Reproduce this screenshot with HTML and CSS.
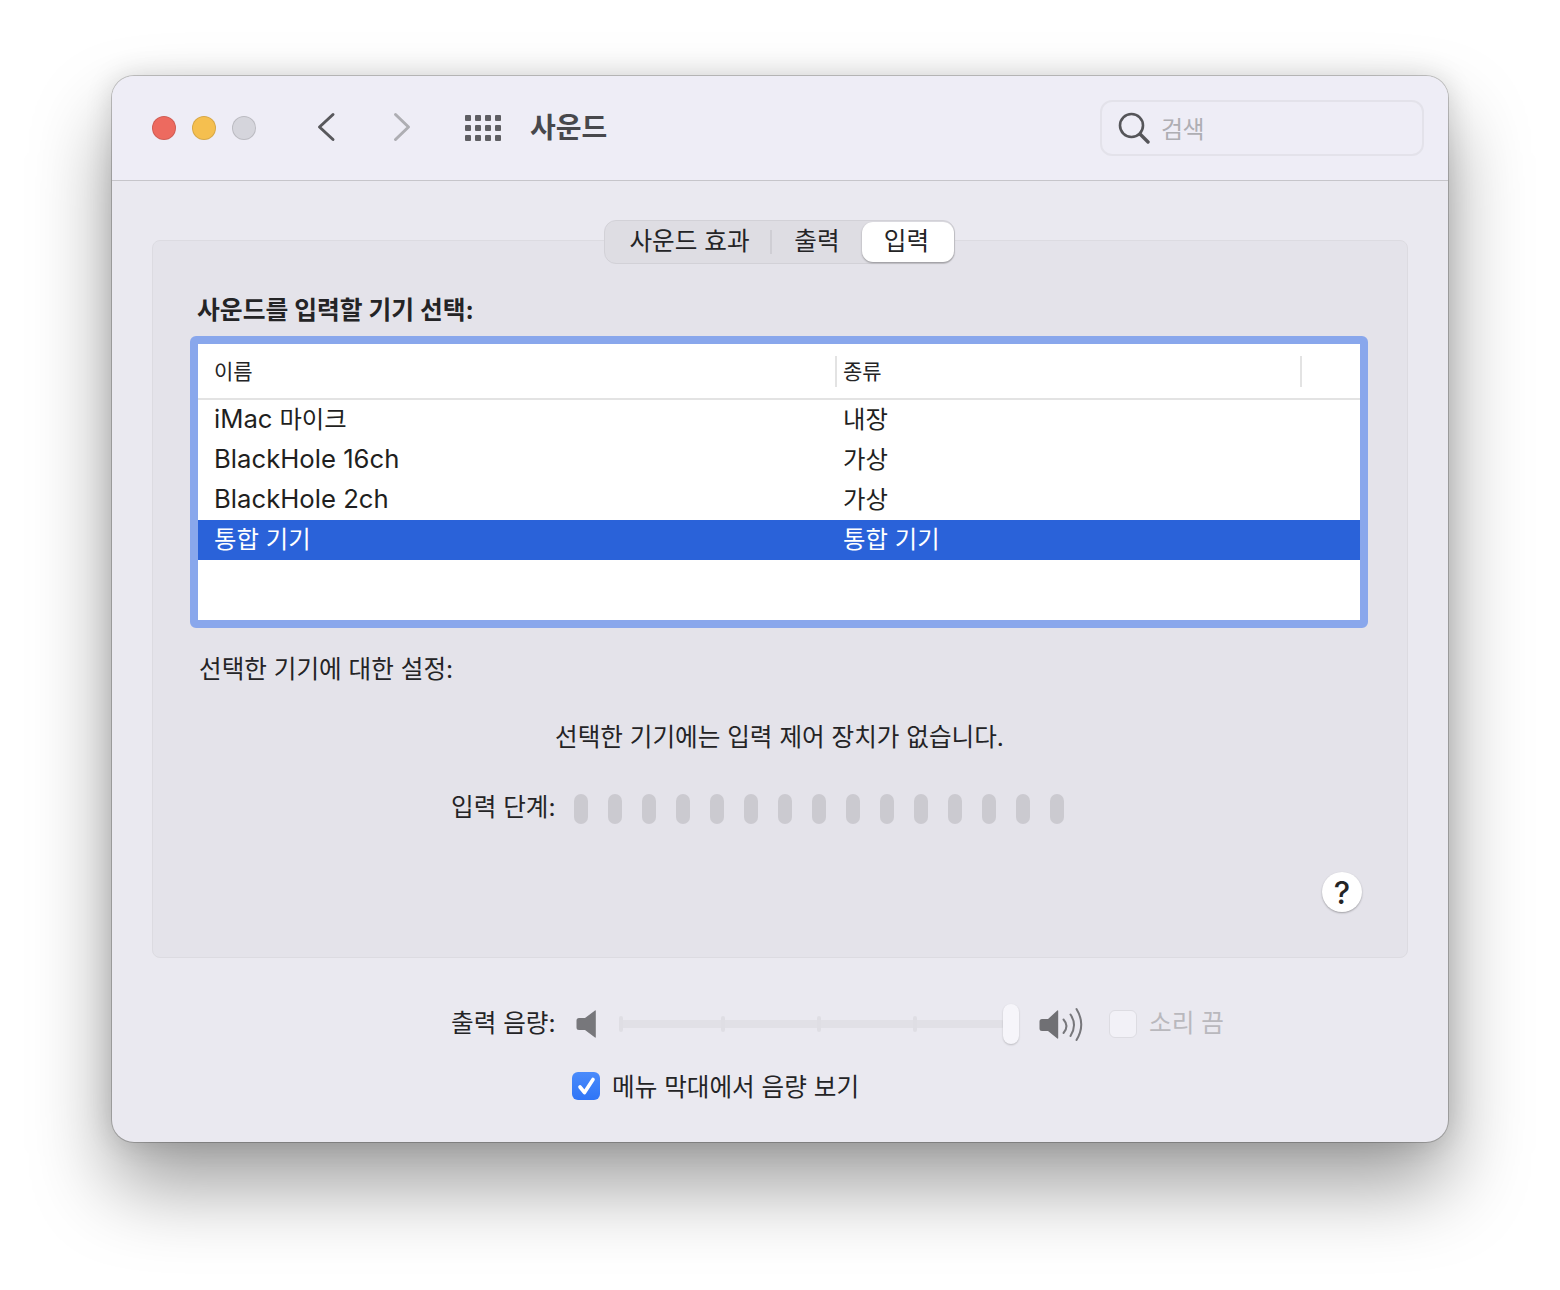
FILE: index.html
```html
<!DOCTYPE html>
<html lang="ko">
<head>
  <meta charset="UTF-8">
  <title>사운드</title>
  <link rel="stylesheet" href="styles.css">
</head>
<body>
  <div class="window">
    <!-- 타이틀 바 -->
    <div class="titlebar">
      <div class="lights">
        <span class="light red"></span>
        <span class="light yellow"></span>
        <span class="light gray"></span>
      </div>
      <svg class="nav-icon" width="20" height="32" viewBox="0 0 20 32"><path d="M17 3.5 L3.5 16 L17 28.5" fill="none" stroke="#58585c" stroke-width="3" stroke-linecap="round" stroke-linejoin="round"/></svg>
      <svg class="nav-icon next" width="20" height="32" viewBox="0 0 20 32"><path d="M3.5 3.5 L16.5 16 L3.5 28.5" fill="none" stroke="#aeaeb3" stroke-width="3" stroke-linecap="round" stroke-linejoin="round"/></svg>
      <div class="grid-icon">
        <i></i><i></i><i></i><i></i><i></i><i></i><i></i><i></i><i></i><i></i><i></i><i></i>
      </div>
      <div class="title">사운드</div>
      <div class="search">
        <svg width="32" height="32" viewBox="0 0 32 32"><circle cx="13.5" cy="13.5" r="11.5" fill="none" stroke="#555559" stroke-width="2.6"/><path d="M22 22 L30 30" stroke="#555559" stroke-width="3.4" stroke-linecap="round"/></svg>
        <span>검색</span>
      </div>
    </div>

    <div class="content">
      <div class="panel">
        <div class="tabs">
          <div class="tab tab-first">사운드 효과</div>
          <div class="tab-sep"></div>
          <div class="tab tab-second">출력</div>
          <div class="tab tab-active">입력</div>
        </div>

        <div class="heading">사운드를 입력할 기기 선택:</div>

        <div class="device-table">
          <div class="table-head">
            <div class="col-name">이름</div>
            <div class="col-type">종류</div>
          </div>
          <div class="table-row"><div class="col-name"><span class="latin">iMac</span> 마이크</div><div class="col-type">내장</div></div>
          <div class="table-row"><div class="col-name"><span class="latin">BlackHole 16ch</span></div><div class="col-type">가상</div></div>
          <div class="table-row"><div class="col-name"><span class="latin">BlackHole 2ch</span></div><div class="col-type">가상</div></div>
          <div class="table-row selected"><div class="col-name">통합 기기</div><div class="col-type">통합 기기</div></div>
        </div>

        <div class="settings-label">선택한 기기에 대한 설정:</div>
        <div class="no-control">선택한 기기에는 입력 제어 장치가 없습니다.</div>

        <div class="level-row">
          <div class="row-label">입력 단계:</div>
          <div class="level-bars">
            <i></i><i></i><i></i><i></i><i></i><i></i><i></i><i></i><i></i><i></i><i></i><i></i><i></i><i></i><i></i>
          </div>
        </div>

        <div class="help-wrap"><div class="help">?</div></div>
      </div>

      <!-- 출력 음량 -->
      <div class="volume-row">
        <div class="row-label">출력 음량:</div>
        <svg class="spk-low" width="20" height="30" viewBox="0 0 20 30"><path d="M19 1.5 Q19.8 1 19.8 2 V28 Q19.8 29 19 28.5 L9 21 H3 Q0.5 21 0.5 18.5 V11.5 Q0.5 9 3 9 H9 Z" fill="#77777b"/></svg>
        <div class="slider">
          <div class="track"></div>
          <span class="tick t1"></span>
          <span class="tick t2"></span>
          <span class="tick t3"></span>
          <span class="tick t4"></span>
          <div class="thumb"></div>
        </div>
        <svg class="spk-high" width="46" height="34" viewBox="0 0 46 34"><path d="M18.3 3.5 Q19.2 3 19.2 4 V31 Q19.2 32 18.3 31.5 L9 24 H3 Q0.5 24 0.5 21.5 V14.5 Q0.5 12 3 12 H9 Z" fill="#707074"/><g fill="none" stroke="#77777b" stroke-width="2" stroke-linecap="round"><path d="M24.5 12.5 Q30.5 19 24.5 26"/><path d="M31.5 7.5 Q38.5 18 31.5 29"/><path d="M37.5 2 Q47 17.5 37.5 33"/></g></svg>
        <div class="check-off"></div>
        <div class="mute-label">소리 끔</div>
      </div>

      <div class="menu-row">
        <div class="check-on">
          <svg width="28" height="28" viewBox="0 0 28 28"><path d="M8 15 L12.5 20.5 L21 7.5" fill="none" stroke="#fff" stroke-width="3.6" stroke-linecap="round" stroke-linejoin="round"/></svg>
        </div>
        <div class="menu-label">메뉴 막대에서 음량 보기</div>
      </div>
    </div>
  </div>
</body>
</html>
```

FILE: styles.css
```css
* {
  box-sizing: border-box;
}

body {
  margin: 0;
  padding: 76px 112px 148px;
  background-color: #fff;
  font-family: "Inter", "Noto Sans CJK KR", sans-serif;
  color: #242426;
}

.window {
  width: 1336px;
  height: 1066px;
  background-color: #eae9f0;
  border-radius: 22px;
  box-shadow: 0 0 0 1px rgba(0, 0, 0, 0.2), 0 44px 80px rgba(0, 0, 0, 0.38), 0 0 28px rgba(0, 0, 0, 0.14);
  overflow: hidden;
}

/* 타이틀 바 */
.titlebar {
  display: flex;
  align-items: center;
  height: 105px;
  padding: 0 24px 1px 40px;
  background-color: #eeedf6;
  border-bottom: 1px solid #c6c5ca;
}

.lights {
  display: flex;
  gap: 16px;
  margin-right: 60px;
}

.light {
  width: 24px;
  height: 24px;
  border-radius: 50%;
  border: 1px solid rgba(0, 0, 0, 0.12);
}

.red { background-color: #ed6a5f; }
.yellow { background-color: #f5bf4f; }
.gray { background-color: #d5d5dc; }

.nav-icon {
  margin-bottom: 2px;
}

.next {
  margin-left: 56px;
}

.grid-icon {
  display: grid;
  grid-template-columns: repeat(4, 6px);
  gap: 4px;
  margin-left: 53px;
}

.grid-icon i {
  width: 6px;
  height: 6px;
  border-radius: 1px;
  background-color: #5e5e63;
}

.title {
  margin-left: 29px;
  margin-bottom: 4px;
  font-size: 28px;
  font-weight: 700;
  color: #48484c;
}

.search {
  display: flex;
  align-items: center;
  width: 324px;
  height: 56px;
  margin-left: auto;
  padding-left: 16px;
  border: 2px solid #e3e2ea;
  border-radius: 12px;
  font-size: 24px;
  color: #aeaeb3;
}

.search span {
  margin-left: 11px;
  letter-spacing: -0.7px;
}

.content {
  padding: 59px 40px 0;
}

.panel {
  height: 718px;
  padding: 0 38px 0 37px;
  background-color: #e4e3ea;
  border: 1px solid #dcdbe1;
  border-radius: 8px;
}

/* 탭 */
.tabs {
  display: flex;
  align-items: center;
  width: 351px;
  height: 44px;
  margin: -21px auto 0;
  background-color: #dedde3;
  border: 1px solid #d2d1d7;
  border-radius: 12px;
  font-size: 24.6px;
}

.tab {
  height: 40px;
  line-height: 38px;
  text-align: center;
}

.tab-first {
  width: 165px;
  padding-left: 4px;
}

.tab-sep {
  width: 2px;
  height: 24px;
  background-color: #cfced4;
}

.tab-second {
  width: 90px;
}

.tab-active {
  width: 92px;
  padding-right: 3px;
  background-color: #fff;
  border-radius: 11px;
  box-shadow: 0 1px 2px rgba(0, 0, 0, 0.35);
}

.heading {
  margin: 28px 0 0 7px;
  height: 44px;
  font-size: 24.8px;
  line-height: 36px;
  font-weight: 700;
}

/* 기기 목록 */
.device-table {
  width: 1178px;
  height: 292px;
  background-color: #fff;
  border: 8px solid #89a7ec;
  border-radius: 6px;
}

.table-head {
  display: flex;
  align-items: center;
  height: 56px;
  border-bottom: 2px solid #e3e3e3;
  font-size: 21px;
}

.table-head .col-name {
  width: 639px;
  height: 31px;
  line-height: 31px;
  padding-left: 16px;
  border-right: 2px solid #e3e3e3;
}

.table-head .col-type {
  width: 465px;
  height: 31px;
  line-height: 31px;
  padding-left: 6px;
  border-right: 2px solid #e3e3e3;
}

.table-row {
  display: flex;
  height: 40px;
  line-height: 38px;
  font-size: 24.4px;
  color: #1f1f21;
}

.latin {
  font-size: 25.7px;
}

.col-name {
  width: 638px;
  padding-left: 16px;
}

.col-type {
  padding-left: 7px;
}

.selected {
  background-color: #2a62d9;
  color: #fff;
}

.settings-label {
  margin: 23px 0 0 9px;
  height: 36px;
  line-height: 36px;
  font-size: 24.6px;
}

.no-control {
  margin-top: 32px;
  height: 36px;
  line-height: 36px;
  text-align: center;
  font-size: 24.6px;
}

.level-row {
  display: flex;
  align-items: center;
  height: 30px;
  margin: 39px 0 0 261px;
}

.row-label {
  width: 104px;
  margin-bottom: 4px;
  font-size: 24.6px;
  white-space: nowrap;
  line-height: 30px;
}

.level-bars {
  display: flex;
  gap: 20px;
  margin-left: 19px;
}

.level-bars i {
  width: 14px;
  height: 30px;
  border-radius: 7px;
  background-color: #cbcad0;
}

.help-wrap {
  display: flex;
  justify-content: flex-end;
  margin: 48px 7px 0 0;
}

.help {
  width: 40px;
  height: 40px;
  border-radius: 50%;
  background-color: #fff;
  box-shadow: 0 1px 2px rgba(0, 0, 0, 0.3);
  text-align: center;
  line-height: 42px;
  font-size: 31px;
  font-weight: 500;
}

/* 출력 음량 */
.volume-row {
  display: flex;
  align-items: center;
  height: 40px;
  margin: 46px 0 0 299px;
}

.volume-row .row-label {
  margin-bottom: 2px;
}

.spk-low {
  margin-left: 21px;
}

.slider {
  position: relative;
  width: 400px;
  height: 40px;
  margin-left: 23px;
}

.track {
  position: absolute;
  left: 0;
  right: 14px;
  top: 16px;
  height: 8px;
  background-color: #e1e0e6;
  border-radius: 4px;
}

.tick {
  position: absolute;
  top: 12px;
  width: 4px;
  height: 16px;
  background-color: #dfdee4;
  border-radius: 2px;
}

.t1 { left: 0; }
.t2 { left: 102px; }
.t3 { left: 198px; }
.t4 { left: 294px; }

.thumb {
  position: absolute;
  left: 384px;
  top: 0;
  width: 16px;
  height: 40px;
  background-color: #f6f5fa;
  border-radius: 8px;
  box-shadow: 0 1px 2px rgba(0, 0, 0, 0.2);
}

.spk-high {
  margin-left: 20px;
}

.check-off {
  width: 28px;
  height: 28px;
  margin-left: 24px;
  background-color: #f2f1f7;
  border: 1px solid #dddce2;
  border-radius: 6px;
}

.mute-label {
  margin-left: 12px;
  margin-bottom: 6px;
  font-size: 24.6px;
  color: #b9b8bd;
}

.menu-row {
  display: flex;
  align-items: center;
  height: 36px;
  margin: 24px 0 0 420px;
}

.check-on {
  width: 28px;
  height: 28px;
  background: linear-gradient(#4a8bfb, #2f75f6);
  border-radius: 6px;
}

.check-on svg {
  display: block;
}

.menu-label {
  margin-left: 12px;
  margin-bottom: 2px;
  font-size: 24.6px;
}
```
